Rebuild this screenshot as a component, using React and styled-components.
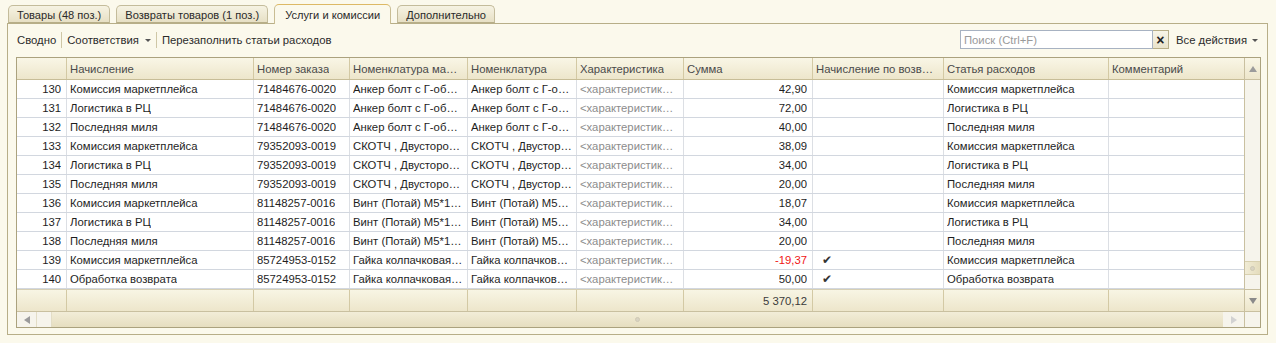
import React from 'react';
import styled, { createGlobalStyle } from 'styled-components';

const GlobalStyle = createGlobalStyle`
  html, body { margin: 0; padding: 0; background: #FBF9EC; }
  body {
    font-family: Arial, "Liberation Sans", sans-serif;
    font-size: 11.3px;
    color: #1e1e1e;
  }
  * { box-sizing: border-box; }
`;

const Page = styled.div`
  width: 1276px;
  height: 343px;
  padding: 3px 8px 0 7px;
  background: #FBF9EC;
`;

const TabStrip = styled.div`
  display: flex;
  align-items: flex-end;
  gap: 6px;
  padding-left: 1px;
  height: 20px;
  position: relative;
  z-index: 1;
`;

const Tab = styled.div`
  height: ${p => (p.$active ? '20px' : '18px')};
  padding: 0 ${p => (p.$active ? '10px' : '8px')};
  display: flex;
  align-items: center;
  border: 1px solid ${p => (p.$active ? '#C9BD93' : '#C4BC9B')};
  border-top-color: ${p => (p.$active ? '#DDB965' : '#C4BC9B')};
  border-bottom: ${p => (p.$active ? 'none' : '1px solid #B7AE88')};
  border-radius: 5px 5px 0 0;
  background: ${p => (p.$active ? '#FBF9EC' : 'linear-gradient(#F6F3E3, #E7E0C5)')};
  color: #2a2a2a;
  font-size: 11.1px;
  white-space: nowrap;
  margin-bottom: ${p => (p.$active ? '-1px' : '0')};
  padding-top: ${p => (p.$active ? '0' : '1px')};
`;

const Panel = styled.div`
  border: 1px solid #B7AE88;
  height: 312px;
  padding: 0 7px 0 8px;
  background: #FBF9EC;
`;

const Toolbar = styled.div`
  display: flex;
  align-items: center;
  height: 19px;
  margin: 6px 0 8px;
  padding-left: 1px;
`;

const ToolButton = styled.div`
  display: flex;
  align-items: center;
  gap: 6px;
  padding: 0 5px 0 0;
  color: #2b2b2b;
  white-space: nowrap;
`;

const Sep = styled.div`
  width: 1px;
  height: 16px;
  background: #CFC7A6;
  margin: 0 5px 0 0;
`;

const Caret = styled.span`
  display: inline-block;
  width: 0;
  height: 0;
  border-left: 3px solid transparent;
  border-right: 3px solid transparent;
  border-top: 3px solid #555;
  margin-top: 2px;
`;

const Spacer = styled.div`
  flex: 1;
`;

const SearchBox = styled.div`
  display: flex;
  align-items: stretch;
  height: 19px;
  margin-right: 7px;
`;

const SearchInput = styled.div`
  width: 193px;
  border: 1px solid #A7B2C2;
  background: #fff;
  color: #9a9a9a;
  padding: 0 3px;
  display: flex;
  align-items: center;
`;

const ClearBtn = styled.div`
  width: 16px;
  border: 1px solid #B7AE88;
  border-left: none;
  background: linear-gradient(#F8F5E8, #E9E3CB);
  display: flex;
  align-items: center;
  justify-content: center;
  font-weight: bold;
  font-size: 14px;
  color: #222;
`;

const AllActions = styled(ToolButton)`
  gap: 5px;
  padding-right: 2px;
`;

const cols = [
  { w: 50, title: '' },
  { w: 187, title: 'Начисление' },
  { w: 96, title: 'Номер заказа' },
  { w: 118, title: 'Номенклатура маркетплейса' },
  { w: 109, title: 'Номенклатура' },
  { w: 107, title: 'Характеристика' },
  { w: 129, title: 'Сумма' },
  { w: 131, title: 'Начисление по возврату' },
  { w: 165, title: 'Статья расходов' },
  { w: 135, title: 'Комментарий' },
];

const gridCols = cols.map(c => `${c.w}px`).join(' ');

const Table = styled.div`
  width: 1245px;
  height: 271px;
  border: 1px solid #ABA27E;
  background: #fff;
  display: flex;
  flex-direction: column;
`;

const Upper = styled.div`
  display: flex;
  flex: 1;
  min-height: 0;
`;

const Columns = styled.div`
  width: 1227px;
  display: flex;
  flex-direction: column;
`;

const HeadRow = styled.div`
  display: grid;
  grid-template-columns: ${gridCols};
  height: 22px;
  background: linear-gradient(#F9F6E6, #EDE6CB);
  border-bottom: 1px solid #C7BD97;
`;

const HeadCell = styled.div`
  border-right: 1px solid #D3C9A4;
  padding: 0 4px 0 3px;
  display: flex;
  align-items: center;
  color: #4a4a4a;
  white-space: nowrap;
  overflow: hidden;
  min-width: 0;
  & > span { overflow: hidden; text-overflow: ellipsis; }
  &:last-child { border-right: none; }
`;

const Body = styled.div`
  flex: 1;
  background: #fff;
`;

const Row = styled.div`
  display: grid;
  grid-template-columns: ${gridCols};
  height: 19px;
  border-bottom: 1px solid #D2D7DF;
`;

const Cell = styled.div`
  border-right: 1px solid #DCDFE4;
  padding: 0 ${p => (p.$align === 'right' ? '5px' : '4px')} 0 3px;
  display: flex;
  align-items: center;
  justify-content: ${p => (p.$align === 'right' ? 'flex-end' : 'flex-start')};
  color: ${p => p.$color || '#1e1e1e'};
  white-space: nowrap;
  overflow: hidden;
  min-width: 0;
  & > span { overflow: hidden; text-overflow: ellipsis; }
  &:last-child { border-right: none; }
`;

const Check = styled.span`
  font-size: 12px;
  color: #333;
  padding-left: 6px;
`;

const FootRow = styled.div`
  display: grid;
  grid-template-columns: ${gridCols};
  height: 22px;
  background: linear-gradient(#F8F5E4, #EDE6CB);
  border-top: 1px solid #D6CFB4;
`;

const FootCell = styled.div`
  border-right: 1px solid #D3C9A4;
  padding: 0 5px;
  display: flex;
  align-items: center;
  justify-content: ${p => (p.$align === 'right' ? 'flex-end' : 'flex-start')};
  color: #3a3a3a;
  &:last-child { border-right: none; }
`;

const VScroll = styled.div`
  width: 16px;
  display: flex;
  flex-direction: column;
  border-left: 1px solid #C9C0A0;
  background: #F6F4EC;
`;

const ScrollBtn = styled.div`
  height: ${p => p.$h || 22}px;
  background: linear-gradient(#F9F6E6, #EDE6CB);
  display: flex;
  align-items: center;
  justify-content: center;
  border-bottom: ${p => (p.$bb ? '1px solid #C9C0A0' : 'none')};
  border-top: ${p => (p.$bt ? '1px solid #C9C0A0' : 'none')};
`;

const Tri = styled.span`
  width: 0;
  height: 0;
  ${p => p.$dir === 'up' && `border-left:4px solid transparent;border-right:4px solid transparent;border-bottom:6px solid ${p.$c || '#9b9b9b'};`}
  ${p => p.$dir === 'down' && `border-left:4px solid transparent;border-right:4px solid transparent;border-top:6px solid ${p.$c || '#8e8e8e'};`}
  ${p => p.$dir === 'left' && `border-top:4px solid transparent;border-bottom:4px solid transparent;border-right:6px solid ${p.$c || '#9b9b9b'};`}
  ${p => p.$dir === 'right' && `border-top:4px solid transparent;border-bottom:4px solid transparent;border-left:6px solid ${p.$c || '#d2d2d2'};`}
`;

const VTrack = styled.div`
  flex: 1;
  display: flex;
  flex-direction: column;
  justify-content: flex-end;
  padding-bottom: 14px;
`;

const VThumb = styled.div`
  height: 14px;
  background: linear-gradient(90deg, #F1ECD6, #E4DCBC);
  border-top: 1px solid #D8D0AF;
  border-bottom: 1px solid #D8D0AF;
  display: flex;
  align-items: center;
  justify-content: center;
`;

const Grip = styled.span`
  width: 5px;
  height: 5px;
  border-radius: 50%;
  background: #D8D3C2;
  border: 1px solid #CFC9B4;
`;

const HScroll = styled.div`
  height: 16px;
  display: flex;
  border-top: 1px solid #C9C0A0;
  background: #F6F4EC;
`;

const HPiece = styled.div`
  width: ${p => p.$w}px;
  background: #F6F4EC;
  border-right: 1px solid #E3DDC6;
`;

const HThumb = styled.div`
  flex: 1;
  background: linear-gradient(#F2EDD8, #E6DEC0);
  display: flex;
  align-items: center;
  justify-content: center;
`;

const HCorner = styled.div`
  width: 16px;
  border-left: 1px solid #C9C0A0;
  background: #F6F4EC;
`;

const HBtn = styled.div`
  width: ${p => p.$w}px;
  display: flex;
  align-items: center;
  justify-content: center;
  background: #F6F4EC;
  border-right: ${p => (p.$br ? '1px solid #E3DDC6' : 'none')};
`;

const CHAR = '<характеристики не используются>';
const ANKER = 'Анкер болт с Г-образным крюком';
const SKOTCH = 'СКОТЧ , Двусторонний монтажный';
const VINT = 'Винт (Потай) М5*12 оцинкованный';
const GAIKA = 'Гайка колпачковая М6 оцинкованная';

const rows = [
  [130, 'Комиссия маркетплейса', '71484676-0020', ANKER, '42,90', false, 'Комиссия маркетплейса'],
  [131, 'Логистика в РЦ', '71484676-0020', ANKER, '72,00', false, 'Логистика в РЦ'],
  [132, 'Последняя миля', '71484676-0020', ANKER, '40,00', false, 'Последняя миля'],
  [133, 'Комиссия маркетплейса', '79352093-0019', SKOTCH, '38,09', false, 'Комиссия маркетплейса'],
  [134, 'Логистика в РЦ', '79352093-0019', SKOTCH, '34,00', false, 'Логистика в РЦ'],
  [135, 'Последняя миля', '79352093-0019', SKOTCH, '20,00', false, 'Последняя миля'],
  [136, 'Комиссия маркетплейса', '81148257-0016', VINT, '18,07', false, 'Комиссия маркетплейса'],
  [137, 'Логистика в РЦ', '81148257-0016', VINT, '34,00', false, 'Логистика в РЦ'],
  [138, 'Последняя миля', '81148257-0016', VINT, '20,00', false, 'Последняя миля'],
  [139, 'Комиссия маркетплейса', '85724953-0152', GAIKA, '-19,37', true, 'Комиссия маркетплейса'],
  [140, 'Обработка возврата', '85724953-0152', GAIKA, '50,00', true, 'Обработка возврата'],
];

export default function App() {
  return (
    <Page>
      <GlobalStyle />
      <TabStrip>
        <Tab>Товары (48 поз.)</Tab>
        <Tab>Возвраты товаров (1 поз.)</Tab>
        <Tab $active>Услуги и комиссии</Tab>
        <Tab>Дополнительно</Tab>
      </TabStrip>
      <Panel>
        <Toolbar>
          <ToolButton>Сводно</ToolButton>
          <Sep />
          <ToolButton><span>Соответствия</span><Caret /></ToolButton>
          <Sep />
          <ToolButton>Перезаполнить статьи расходов</ToolButton>
          <Spacer />
          <SearchBox>
            <SearchInput>Поиск (Ctrl+F)</SearchInput>
            <ClearBtn>×</ClearBtn>
          </SearchBox>
          <AllActions><span>Все действия</span><Caret /></AllActions>
        </Toolbar>
        <Table>
          <Upper>
            <Columns>
              <HeadRow>
                {cols.map((c, i) => (
                  <HeadCell key={i}><span>{c.title}</span></HeadCell>
                ))}
              </HeadRow>
              <Body>
                {rows.map(r => {
                  const neg = r[4].startsWith('-');
                  return (
                    <Row key={r[0]}>
                      <Cell $align="right"><span>{r[0]}</span></Cell>
                      <Cell><span>{r[1]}</span></Cell>
                      <Cell><span>{r[2]}</span></Cell>
                      <Cell><span>{r[3]}</span></Cell>
                      <Cell><span>{r[3]}</span></Cell>
                      <Cell $color="#8c8c8c"><span>{CHAR}</span></Cell>
                      <Cell $align="right" $color={neg ? '#F01414' : undefined}><span>{r[4]}</span></Cell>
                      <Cell>{r[5] && <Check>✔</Check>}</Cell>
                      <Cell><span>{r[6]}</span></Cell>
                      <Cell />
                    </Row>
                  );
                })}
              </Body>
              <FootRow>
                {cols.map((c, i) => (
                  <FootCell key={i} $align={i === 6 ? 'right' : 'left'}>{i === 6 ? '5 370,12' : ''}</FootCell>
                ))}
              </FootRow>
            </Columns>
            <VScroll>
              <ScrollBtn $h={22} $bb><Tri $dir="up" /></ScrollBtn>
              <VTrack>
                <VThumb><Grip /></VThumb>
              </VTrack>
              <ScrollBtn $h={22} $bt><Tri $dir="down" $c="#8a8a8a" /></ScrollBtn>
            </VScroll>
          </Upper>
          <HScroll>
            <HBtn $w={20} $br><Tri $dir="left" /></HBtn>
            <HPiece $w={15} />
            <HThumb><Grip /></HThumb>
            <HBtn $w={21}><Tri $dir="right" /></HBtn>
            <HCorner />
          </HScroll>
        </Table>
      </Panel>
    </Page>
  );
}
